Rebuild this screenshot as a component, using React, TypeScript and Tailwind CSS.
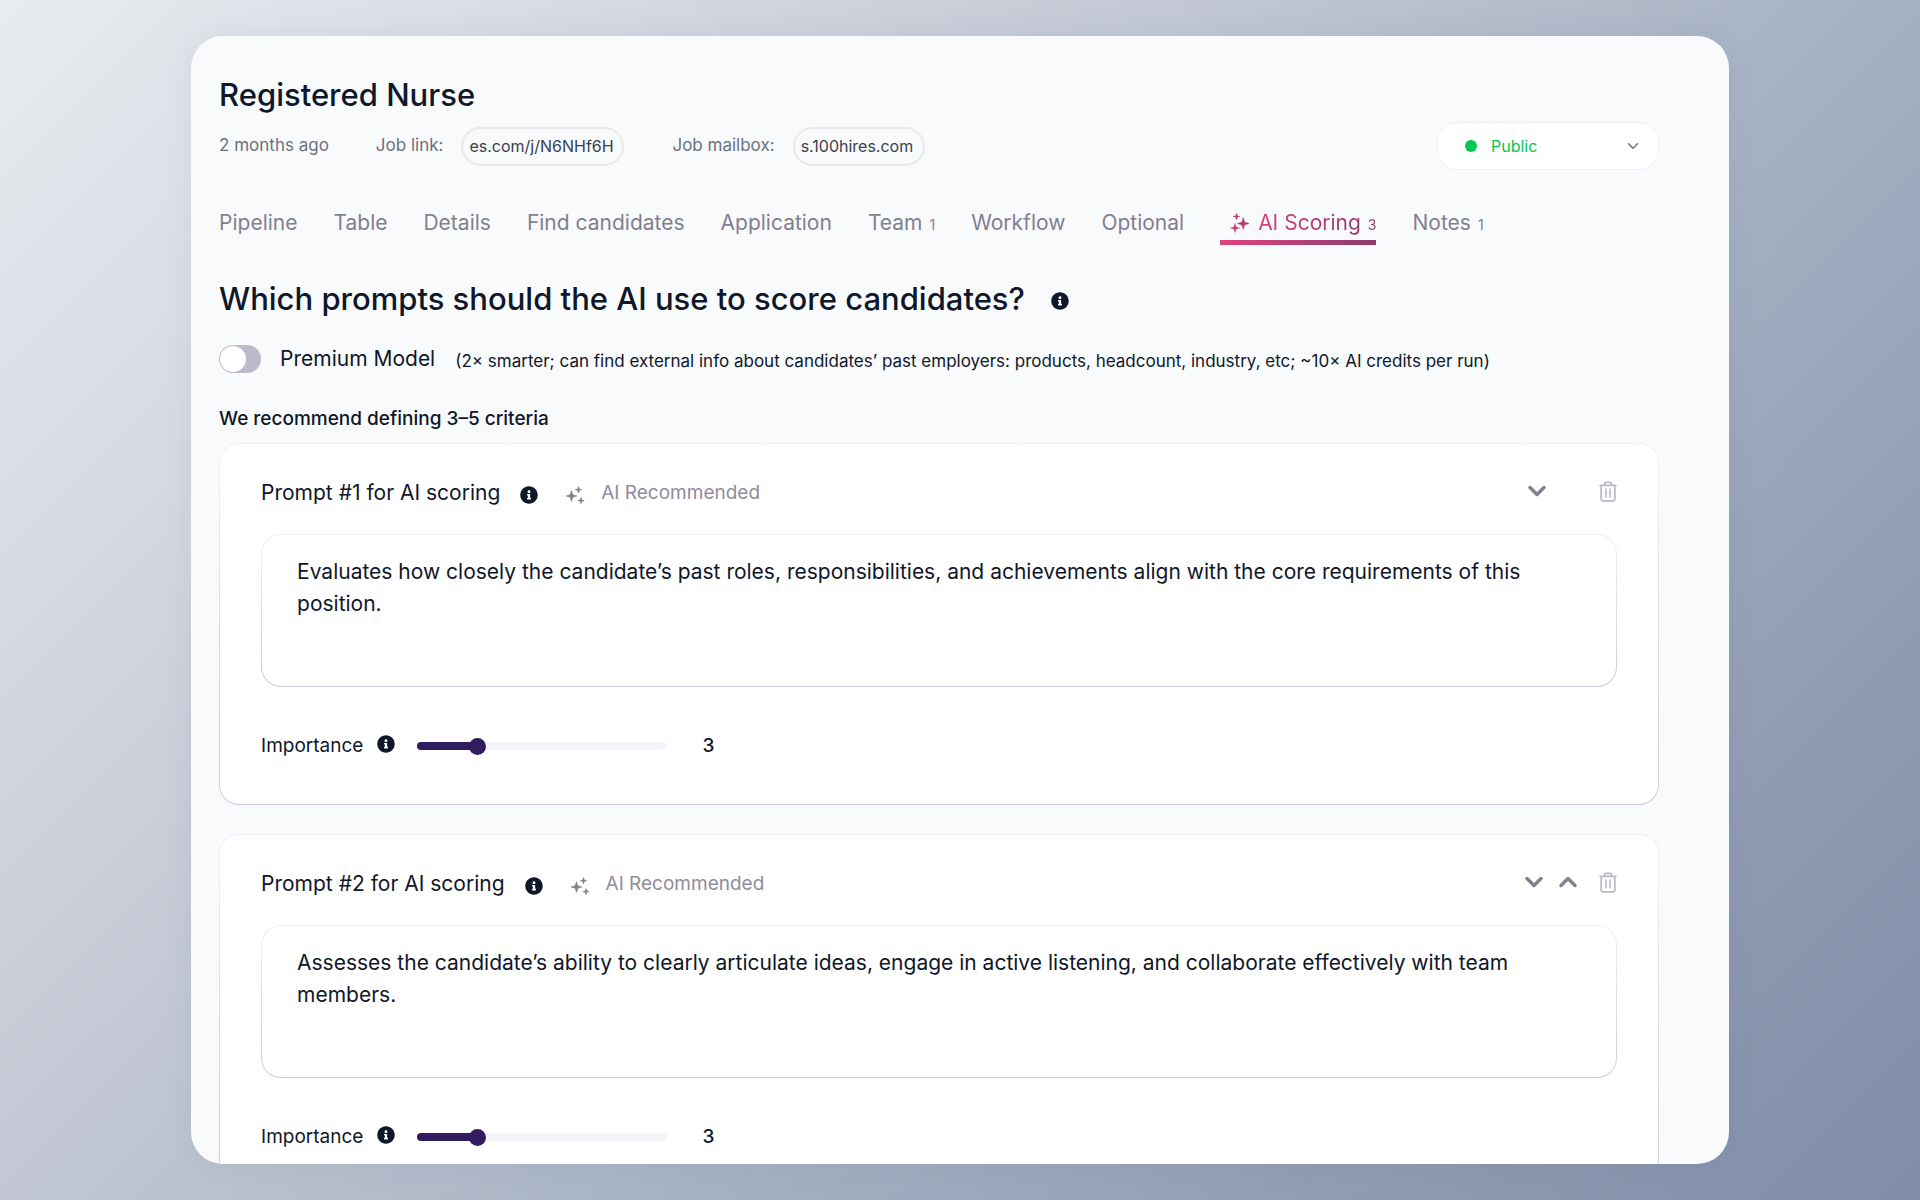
import { useLayoutEffect, useRef, useState } from "react";
import { ChevronDown, ChevronUp } from "lucide-react";
import { FaInfoCircle } from "react-icons/fa";

const star = (x: number, y: number, r: number) => {
  const k = r * 0.24;
  return `M${x} ${y - r}L${x + k} ${y - k}L${x + r} ${y}L${x + k} ${y + k}L${x} ${y + r}L${x - k} ${y + k}L${x - r} ${y}L${x - k} ${y - k}Z`;
};

function TabSparkles() {
  return (
    <svg viewBox="0 0 20 22" className="h-[22px] w-5" aria-hidden="true">
      <defs>
        <linearGradient id="tab-sparkle" x1="0" x2="1">
          <stop offset="0" stopColor="#cf3d76" />
          <stop offset="1" stopColor="#a83a74" />
        </linearGradient>
      </defs>
      <path
        fill="url(#tab-sparkle)"
        stroke="url(#tab-sparkle)"
        strokeWidth="0.4"
        strokeLinejoin="round"
        d={star(6.5, 4.5, 3.5) + star(13.2, 11.5, 6) + star(5, 16, 4.6)}
      />
    </svg>
  );
}

function Sparkles() {
  return (
    <svg viewBox="0 0 20 20" className="mt-1 mr-4 ml-[27px] size-5 text-[#827f91]" aria-hidden="true">
      <path
        fill="currentColor"
        stroke="currentColor"
        strokeWidth="0.6"
        strokeLinejoin="round"
        d={star(6.5, 11, 5.4) + star(13.5, 4.7, 3.2) + star(16, 15.6, 3.2)}
      />
    </svg>
  );
}

function Trash() {
  return (
    <svg viewBox="0 0 18 21" className="h-[21px] w-[18px]" fill="none" stroke="currentColor" strokeWidth="1.8" aria-hidden="true">
      <path d="M1 4.3H17" strokeLinecap="round" />
      <path d="M5.5 4V3Q5.5 1.3 7 1.3H11Q12.5 1.3 12.5 3V4" />
      <path d="M2.2 4.5V18.6Q2.2 19.8 3.4 19.8H14.6Q15.8 19.8 15.8 18.6V4.5" />
      <path d="M7 7.5V16.3M11 7.5V16.3" strokeWidth="1.6" />
    </svg>
  );
}

function LinkField({ id, label, value, width }: { id: string; label: string; value: string; width: string }) {
  const ref = useRef<HTMLInputElement>(null);
  useLayoutEffect(() => {
    if (ref.current) ref.current.scrollLeft = ref.current.scrollWidth;
  }, []);
  return (
    <div className="flex items-center gap-[18px]">
      <label htmlFor={id} className="text-[17px] text-[#6b7280]">
        {label}
      </label>
      <input
        id={id}
        ref={ref}
        readOnly
        defaultValue={value}
        className={`h-[39px] rounded-full border-2 border-[#e8e9ec] bg-transparent px-[6px] text-base text-[#374151] outline-none ${width}`}
      />
    </div>
  );
}

const tabs: { name: string; count?: number; active?: boolean }[] = [
  { name: "Pipeline" },
  { name: "Table" },
  { name: "Details" },
  { name: "Find candidates" },
  { name: "Application" },
  { name: "Team", count: 1 },
  { name: "Workflow" },
  { name: "Optional" },
  { name: "AI Scoring", count: 3, active: true },
  { name: "Notes", count: 1 },
];

function Tabs() {
  return (
    <nav className="mt-[37px] flex gap-9 text-[21px] leading-8 whitespace-nowrap text-[#827f91]">
      {tabs.map((t) =>
        t.active ? (
          <a key={t.name} href="#" aria-current="page" className="flex flex-col">
            <span className="flex items-center gap-2 pl-[10px]">
              <TabSparkles />
              <span className="bg-linear-to-r from-[#d63f7a] to-[#8c3a70] bg-clip-text text-transparent">
                {t.name}
                <span className="ml-[7px] text-sm">{t.count}</span>
              </span>
            </span>
            <span className="mt-px h-[5px] bg-linear-to-r from-[#e0437c] to-[#8c3a70]" />
          </a>
        ) : (
          <a key={t.name} href="#">
            {t.name}
            {t.count && <span className="ml-[7px] text-sm">{t.count}</span>}
          </a>
        ),
      )}
    </nav>
  );
}

function Importance({ id, initial }: { id: string; initial: number }) {
  const [value, setValue] = useState(initial);
  const filled = ((value - 1) / 9) * 100;
  return (
    <div className="mt-[47px] flex items-center">
      <label htmlFor={id} className="text-[19px] leading-6">
        Importance
      </label>
      <FaInfoCircle className="mb-1 ml-[14px] size-[18px]" />
      <input
        id={id}
        type="range"
        min={1}
        max={10}
        value={value}
        onChange={(e) => setValue(Number(e.target.value))}
        style={{ backgroundImage: `linear-gradient(to right, #321c60 ${filled}%, #f6f4fb ${filled}%)` }}
        className="ml-[22px] h-2 w-[250px] appearance-none rounded-full [&::-webkit-slider-thumb]:size-[17px] [&::-webkit-slider-thumb]:appearance-none [&::-webkit-slider-thumb]:rounded-full [&::-webkit-slider-thumb]:bg-[#321c60]"
      />
      <output htmlFor={id} className="ml-[35px] text-[19px] leading-6 font-medium">
        {value}
      </output>
    </div>
  );
}

function PromptCard({ index, text, canMoveUp }: { index: number; text: string; canMoveUp: boolean }) {
  return (
    <section className="rounded-[20px] border border-transparent px-[41px] pt-8 pb-[46px] [background:linear-gradient(#fff,#fff)_padding-box,linear-gradient(#f0f0f5,#cfcae0)_border-box]">
      <div className="flex items-center">
        <label htmlFor={`prompt-${index}`} className="text-[21px] leading-[34px]">
          Prompt #{index} for AI scoring
        </label>
        <FaInfoCircle className="mt-1 ml-5 size-[18px]" />
        <Sparkles />
        <span className="text-[19px] leading-8 text-[#8f8c9c]">AI Recommended</span>
        <div className="mb-1 ml-auto flex items-center text-[#827f91]">
          <button type="button" aria-label="Move down" className={canMoveUp ? "mr-[6px]" : "mr-12"}>
            <ChevronDown size={28} strokeWidth={3} />
          </button>
          {canMoveUp && (
            <button type="button" aria-label="Move up" className="mr-[17px]">
              <ChevronUp size={28} strokeWidth={3} />
            </button>
          )}
          <button type="button" aria-label="Delete prompt" className="text-[#bcb8ca]">
            <Trash />
          </button>
        </div>
      </div>
      <textarea
        id={`prompt-${index}`}
        defaultValue={text}
        className="mt-6 block h-[153px] w-full resize-none rounded-[20px] border border-transparent px-[35px] py-[21px] text-[21px] leading-8 outline-none [background:linear-gradient(#fff,#fff)_padding-box,linear-gradient(#f0f0f5,#cfcae0)_border-box]"
      />
      <Importance id={`importance-${index}`} initial={3} />
    </section>
  );
}

export default function App() {
  return (
    <div className="flex h-screen justify-center bg-[linear-gradient(135deg,#e8ecef_0%,#d5d9e2_20%,#c0c6d2_40%,#a6b2c3_60%,#919db3_80%,#7f8da8_100%)] py-9 font-['Inter',sans-serif] text-[#0f172a]">
      <main className="w-[80.1%] overflow-hidden rounded-[32px] bg-[#f9fafc] pt-[39px] pr-[70px] pl-7 shadow-[0_0_30px_rgba(60,80,120,0.08)]">
        <h1 className="text-[31px] leading-10 font-medium">Registered Nurse</h1>
        <div className="mt-[7px] flex items-center text-base">
          <span className="mr-[47px] text-[17px] text-[#6b7280]">2 months ago</span>
          <LinkField id="job-link" label="Job link:" value="es.com/j/N6NHf6H" width="w-[163px] mr-12" />
          <LinkField id="job-mailbox" label="Job mailbox:" value="s.100hires.com" width="w-[132px]" />
          <div className="relative ml-auto">
            <select
              aria-label="Visibility"
              className="h-12 w-[222px] appearance-none rounded-[20px] border border-[#eeeef3] bg-white pl-[53px] text-[#00c950] outline-none"
            >
              <option>Public</option>
            </select>
            <span className="pointer-events-none absolute inset-y-0 left-7 my-auto size-3 rounded-full bg-[#00c950]" />
            <ChevronDown size={18} strokeWidth={2} className="pointer-events-none absolute inset-y-0 right-[17px] my-auto text-[#6b7280]" />
          </div>
        </div>
        <Tabs />
        <div className="mt-[34px] flex items-center">
          <h2 className="text-[31px] leading-10 font-medium">Which prompts should the AI use to score candidates?</h2>
          <FaInfoCircle className="mt-1 ml-[26px] size-[18px]" />
        </div>
        <div className="mt-5 flex items-center">
          <label className="flex items-center gap-[19px] text-[21px] leading-10">
            <input
              type="checkbox"
              role="switch"
              className="flex h-7 w-[42px] appearance-none items-center rounded-full bg-[#bfbacb] px-px before:size-[26px] before:rounded-full before:bg-white"
            />
            Premium Model
          </label>
          <span className="mt-1 ml-5 text-[17px] leading-6">
            (2× smarter; can find external info about candidates’ past employers: products, headcount, industry, etc; ~10× AI credits per run)
          </span>
        </div>
        <p className="mt-6 text-[19px] leading-8 font-medium">We recommend defining 3–5 criteria</p>
        <div className="mt-2 flex flex-col gap-[29px]">
          <PromptCard
            index={1}
            text="Evaluates how closely the candidate’s past roles, responsibilities, and achievements align with the core requirements of this position."
            canMoveUp={false}
          />
          <PromptCard
            index={2}
            text="Assesses the candidate’s ability to clearly articulate ideas, engage in active listening, and collaborate effectively with team members."
            canMoveUp
          />
        </div>
      </main>
    </div>
  );
}
